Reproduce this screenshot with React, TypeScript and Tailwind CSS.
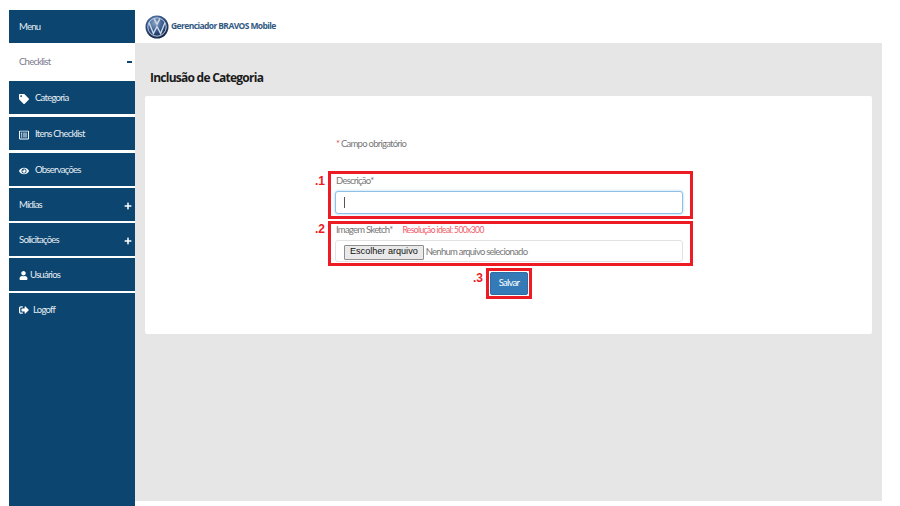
import { FaEye, FaPlus, FaRegListAlt, FaSignOutAlt, FaTag, FaUser } from "react-icons/fa";
import type { ReactNode } from "react";

const bar = "bg-[#0b4570] text-[#e6edf2] flex items-center pl-[10px] pr-[3px] pt-[2px] h-[33px] shrink-0";

function NavRow({ icon, label, plus, gap = "gap-[6px]", className = "" }: { icon?: ReactNode; label: string; plus?: boolean; gap?: string; className?: string }) {
  return (
    <div className={`${bar} ${className}`}>
      <div className={`flex items-center ${gap}`}>
        {icon}
        <span>{label}</span>
      </div>
      {plus && <FaPlus className="ml-auto text-[8px] text-white" />}
    </div>
  );
}

function VwLogo() {
  return (
    <svg width="24" height="24" viewBox="0 0 24 24">
      <defs>
        <radialGradient id="vw" cx="42%" cy="32%" r="75%">
          <stop offset="0%" stopColor="#8ea8c8" />
          <stop offset="50%" stopColor="#2f5288" />
          <stop offset="100%" stopColor="#121f3a" />
        </radialGradient>
      </defs>
      <circle cx="12" cy="12" r="11.5" fill="url(#vw)" />
      <circle cx="12" cy="12" r="9.2" fill="none" stroke="#cfd9e6" strokeWidth="0.9" />
      <path d="M9 3.6 L12 9.2 L15 3.6 M4 7.5 L8.4 18.6 L12 11.5 L15.6 18.6 L20 7.5" fill="none" stroke="#cfd9e6" strokeWidth="1.4" />
    </svg>
  );
}

// caixas vermelhas do tutorial
function Mark({ n, children, className = "", numClass = "top-[-2px]" }: { n: string; children: ReactNode; className?: string; numClass?: string }) {
  return (
    <div className={`relative outline-[3px] outline-[#ed1c24] ${className}`}>
      {children}
      <span className={`absolute left-[-16px] text-[12px] font-bold tracking-normal text-[#ed1c24] font-['Liberation_Sans',sans-serif] ${numClass}`}>{n}</span>
    </div>
  );
}

export default function App() {
  return (
    <div className="h-[506px] w-[900px] overflow-hidden bg-white pl-[9px] pt-[10px] flex font-['Lato',sans-serif] text-[9.5px] tracking-[-0.75px]">
      <aside className="w-[126px] h-[496px] flex flex-col">
        <NavRow label="Menu" />
        <div className="h-[38px] shrink-0 bg-white text-[#7b7b8c] flex items-center justify-between pl-[10px] pr-[3px]">
          <span>Checklist</span>
          <span className="w-[5px] h-[2px] bg-[#0b4570]" />
        </div>
        <NavRow icon={<FaTag className="text-[10px] text-white" />} label="Categoria" />
        <NavRow className="mt-[3px]" icon={<FaRegListAlt className="text-[10px] text-white" />} label="Itens Checklist" />
        <NavRow className="mt-[3px]" icon={<FaEye className="text-[10px] text-white" />} label="Observações" />
        <NavRow className="mt-[2px]" label="Mídias" plus />
        <NavRow className="mt-[2px]" label="Solicitações" plus />
        <NavRow className="mt-[2px]" icon={<FaUser className="text-[9px] text-white" />} label="Usuários" gap="gap-[2px]" />
        <div className="mt-[2px] bg-[#0b4570] text-[#e6edf2] flex-1 pl-[10px] pt-[10px]">
          <div className="flex items-center gap-[4px]">
            <FaSignOutAlt className="text-[10px] text-white" />
            <span>Logoff</span>
          </div>
        </div>
      </aside>

      <main className="w-[747px] flex flex-col">
        <header className="h-[33px] shrink-0 flex items-center gap-[2px] pl-[10px]">
          <VwLogo />
          <span className="-mt-[1px] font-['Open_Sans',sans-serif] font-bold text-[8.5px] tracking-[-0.6px] text-[#32597f]">Gerenciador BRAVOS Mobile</span>
        </header>
        <div className="h-[458px] bg-[#e6e6e6] px-[10px] flex flex-col">
          <h1 className="font-['Open_Sans',sans-serif] font-bold text-[12px] tracking-[-0.75px] leading-[16px] text-[#1a1a1a] pl-[5px] pt-[27px] h-[53px] shrink-0">Inclusão de Categoria</h1>
          <div className="h-[238px] bg-white rounded-[2px] pl-[190px] pt-[42px] text-[#777]">
            <p className="leading-[12px] pl-[1px]">
              <span className="text-[#e0555b]">*</span> Campo obrigatório
            </p>
            <div className="mt-[24px] w-[348px] flex flex-col">
              <Mark n=".1" className="h-[42px] -ml-[4px] -mr-[7px] pl-[4px] pr-[7px] pt-[1px]">
                <label className="block leading-[12px] h-[16px] pl-[1px]">Descrição*</label>
                <div className="h-[23px] rounded-[3px] border border-[#8fc0e8] shadow-[0_0_3px_#a9d2f2] bg-white flex items-center pl-[8px]">
                  <span className="w-px h-[11px] bg-[#555]" />
                </div>
              </Mark>
              <Mark n=".2" numClass="top-[-4px]" className="mt-[8px] h-[39px] -ml-[4px] -mr-[7px] pl-[4px] pr-[7px]">
                <div className="flex leading-[12px] h-[16px] gap-[10px] pl-[1px]">
                  <label>Imagem Sketch*</label>
                  <span className="text-[#ef5a68] text-[8.5px] tracking-[-0.6px]">Resolução ideal: 500x300</span>
                </div>
                <div className="h-[22px] rounded-[3px] border border-[#e2e2e2] bg-white flex items-center pl-[8px] pt-[2px] gap-[2px]">
                  <span className="h-[15px] px-[5px] flex items-center bg-[#e9e9e9] border border-[#8f8f8f] rounded-[1px] text-[#111] text-[9.1px] tracking-[0px] font-['Liberation_Sans',sans-serif]">Escolher arquivo</span>
                  <span>Nenhum arquivo selecionado</span>
                </div>
              </Mark>
              <div className="mt-[8px] flex justify-center">
                <Mark n=".3" className="p-[1px]">
                  <button className="h-[23px] w-[38px] rounded-[2px] bg-[#337ab7] border border-[#2e6da4] text-white">Salvar</button>
                </Mark>
              </div>
            </div>
          </div>
        </div>
      </main>
    </div>
  );
}
